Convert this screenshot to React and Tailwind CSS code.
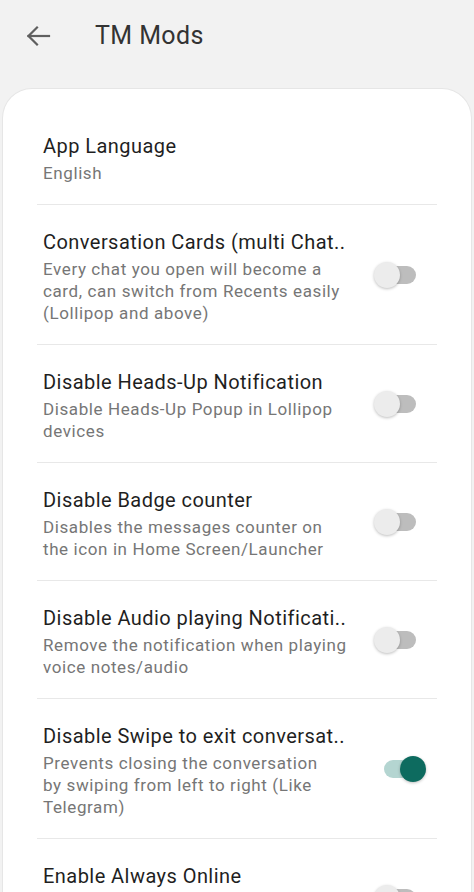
import React, { useState } from 'react';

const rows = [
  { title: 'App Language', lines: ['English'], toggle: null },
  {
    title: 'Conversation Cards (multi Chat..',
    lines: ['Every chat you open will become a', 'card, can switch from Recents easily', '(Lollipop and above)'],
    toggle: false,
  },
  { title: 'Disable Heads-Up Notification', lines: ['Disable Heads-Up Popup in Lollipop', 'devices'], toggle: false },
  { title: 'Disable Badge counter', lines: ['Disables the messages counter on', 'the icon in Home Screen/Launcher'], toggle: false },
  { title: 'Disable Audio playing Notificati..', lines: ['Remove the notification when playing', 'voice notes/audio'], toggle: false },
  {
    title: 'Disable Swipe to exit conversat..',
    lines: ['Prevents closing the conversation', 'by swiping from left to right (Like', 'Telegram)'],
    toggle: true,
  },
  { title: 'Enable Always Online', lines: ['Always show you as online to your', 'contacts while the app is open'], toggle: false },
];

const Switch = ({ on, onToggle }) => (
  <button onClick={onToggle} className="relative w-[52px] h-[26px] shrink-0 -mt-[4px]">
    <span className={`absolute left-[10px] right-[10px] top-[4px] h-[18px] rounded-full ${on ? 'bg-[#b4d5d1]' : 'bg-[#bdbdbd]'}`} />
    <span
      className={`absolute top-0 w-[26px] h-[26px] rounded-full shadow-[0_1px_3px_rgba(0,0,0,0.25)] ${on ? 'right-0 bg-[#0d6b5f]' : 'left-0 bg-[#ececec]'}`}
    />
  </button>
);

export default function App() {
  const [states, setStates] = useState(rows.map(r => r.toggle));

  const flip = (i) => setStates(s => s.map((v, j) => (j === i ? !v : v)));

  return (
    <div className="h-[892px] overflow-hidden bg-[#f2f2f2] font-['Roboto',sans-serif]">
      <header className="h-[88px] flex items-start pt-[18px]">
        <button className="ml-[22px] w-[32px] h-[36px] flex items-center justify-center">
          <svg width="26" height="22" viewBox="0 0 26 22" fill="none" stroke="#5f5f5f" strokeWidth="2.2" strokeLinecap="square">
            <path d="M3.5 11H24" />
            <path d="M12 2.5 3.5 11 12 19.5" />
          </svg>
        </button>
        <h1 className="ml-[41px] text-[25px] leading-[36px] tracking-[0.4px] text-[#333333]">TM Mods</h1>
      </header>

      <div className="mx-[2px] bg-white rounded-t-[30px] border border-b-0 border-[#e6e6e6] pt-[20px]">
        {rows.map((r, i) => (
          <div key={r.title} className={`mx-[34px] ${i > 0 ? 'border-t border-[#e8e8e8]' : ''}`}>
            <div className="flex items-center pl-[6px] pr-[11px] pt-[24px] pb-[20px]">
              <div className="flex-1 min-w-0">
                <div className="text-[20px] leading-[26px] tracking-[0.45px] text-[#1f1f1f] whitespace-nowrap">{r.title}</div>
                <div className="mt-[3px] text-[17px] leading-[22px] tracking-[0.6px] text-[#767676]">
                  {r.lines.map(l => (
                    <div key={l} className="whitespace-nowrap">{l}</div>
                  ))}
                </div>
              </div>
              {r.toggle !== null && <Switch on={states[i]} onToggle={() => flip(i)} />}
            </div>
          </div>
        ))}
      </div>
    </div>
  );
}
